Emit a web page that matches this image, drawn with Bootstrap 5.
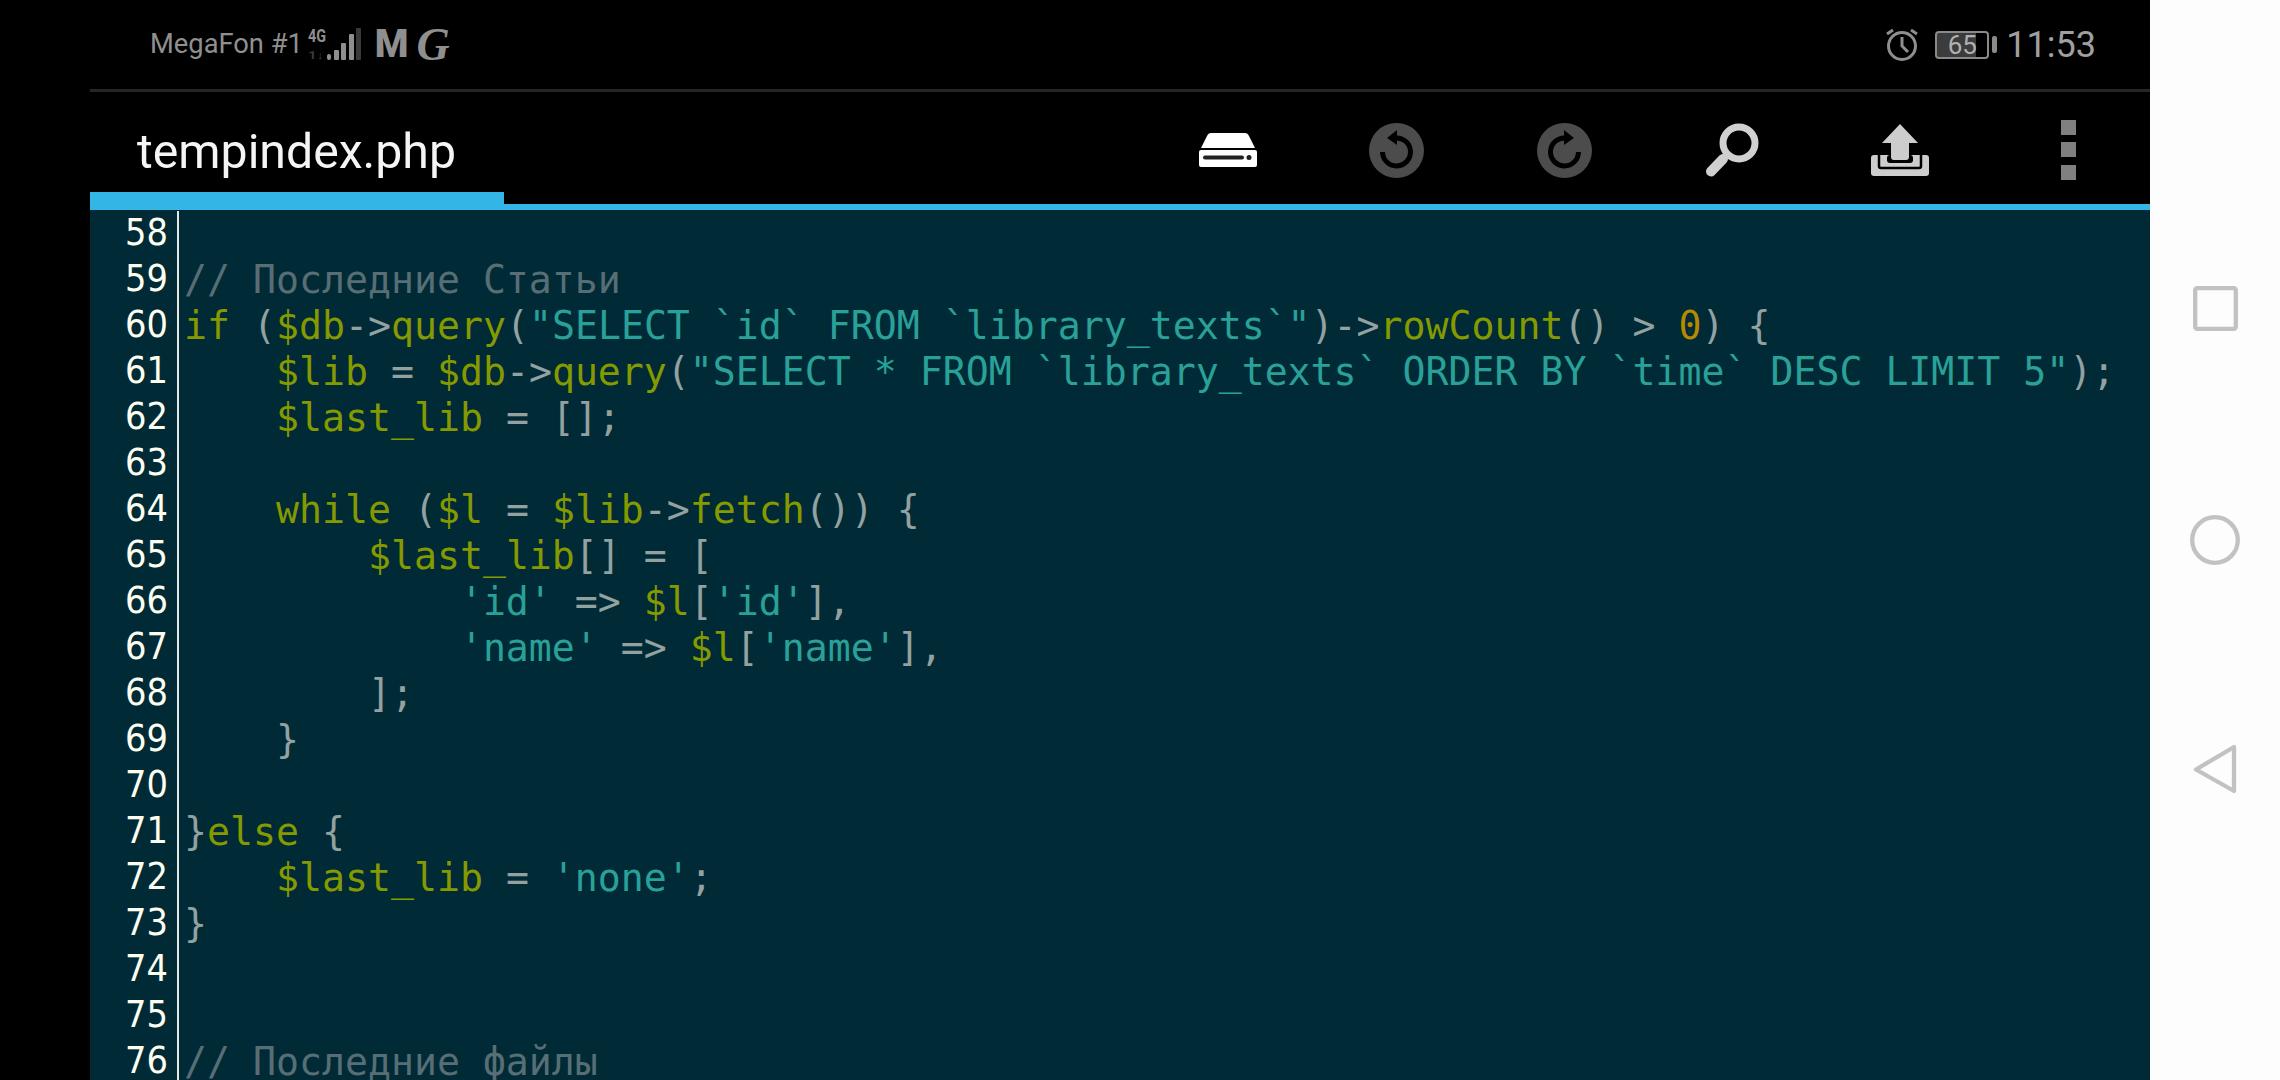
<!DOCTYPE html>
<html><head><meta charset="utf-8">
<link href="https://cdn.jsdelivr.net/npm/bootstrap@5.3.0/dist/css/bootstrap.min.css" rel="stylesheet">
<style>
html,body{margin:0;height:1080px;overflow:hidden;background:#000}
.shell{width:2280px;height:1080px}
.gutterleft{width:90px;background:#000}
.phone{width:2060px;background:#000;min-width:0}
.navside{width:130px;background:#fdfdfd}
.statusline{height:92px;border-bottom:3px solid #262626;padding:0 54px 0 60px;font-family:Roboto,sans-serif;color:#8f8f8f}
.carrier{font-size:27.3px;line-height:1}
.clock{font-size:36px;line-height:1;color:#a0a0a0;margin-left:9px}
.toolrow{height:112px;padding-left:47px}
.fname{font-family:Roboto,sans-serif;font-size:48.200px;line-height:1;color:#f5f5f5;margin-top:8px}
.tools{height:112px;flex:1;margin-right:-2px}
.tool{width:168px;height:112px;padding-top:4px}
.tabbar{height:6px;background:#33b5e5;position:relative}
.tabactive{position:absolute;left:0;bottom:0;width:414px;height:18px;background:#33b5e5}
.editor{background:#002b36;height:870px;overflow:hidden;font-family:"DejaVu Sans Mono",monospace;font-size:38.200px;line-height:46px;padding-top:1px}
.cline{height:46px;white-space:pre}
.num{display:inline-block;text-align:right;color:#fdfdf0;padding-right:9px;height:46px;line-height:43px;border-right:2px solid #e8e8e0;vertical-align:top;margin-right:5px;box-sizing:content-box;width:78px;font-family:"DejaVu Sans Condensed","DejaVu Sans",sans-serif;font-stretch:condensed;font-size:37.500px}
.g{color:#859900}.s{color:#2aa198}.c{color:#586e75}.p{color:#93a1a1}.o{color:#b58900}
.bat{width:54px;height:28px;border:2px solid #8a8a8a;border-radius:4px;font-size:26px;line-height:24px;text-align:center;color:#b0b0b0;background:linear-gradient(90deg,#3c3c3c 78%,#000 78%);font-family:Roboto,sans-serif}
.batcap{width:5px;height:17px;background:#8a8a8a;border-radius:2px;margin-left:3px}
.mlogo{font-family:Roboto,sans-serif;font-weight:900;font-size:38.500px;line-height:1;color:#8f8f8f;margin-left:12px}
.glogo{font-family:"Liberation Serif",serif;font-weight:700;font-style:italic;font-size:46px;line-height:1;color:#8f8f8f;margin-left:8px}
</style></head>
<body>
<div class="shell d-flex">
<div class="gutterleft flex-shrink-0"></div>
<div class="phone d-flex flex-column flex-shrink-0">
 <div class="statusline d-flex align-items-center justify-content-between">
  <div class="d-flex align-items-center">
   <span class="carrier">MegaFon #1</span>
   <svg class="ms-1" width="56" height="48" viewBox="0 -6 56 48"><text x="1" y="15" font-family="Roboto,sans-serif" font-size="19" font-weight="700" fill="#8f8f8f" textLength="18" lengthAdjust="spacingAndGlyphs">4G</text><text x="1" y="32" font-family="Roboto,sans-serif" font-size="11" font-weight="700" fill="#3a3a3a" textLength="16" lengthAdjust="spacingAndGlyphs">1↓</text><g fill="#8f8f8f"><rect x="20" y="27" width="4" height="6" rx="2"/><rect x="27" y="23" width="5" height="10" rx="1"/><rect x="34" y="16" width="5" height="17" rx="1"/><rect x="42" y="7" width="5" height="26" rx="1"/></g><rect x="49" y="1" width="5" height="32" rx="1" fill="#3a3a3a"/></svg>
   <span class="mlogo">M</span>
   <span class="glogo">G</span>
  </div>
  <div class="d-flex align-items-center">
   <svg width="34" height="34" viewBox="0 0 34 34" fill="none" stroke="#8f8f8f" stroke-width="3"><circle cx="17" cy="18" r="13.500"/><path d="M17 9v9l6 6M2 6l6-4M32 6l-6-4"/></svg>
   <div class="bat ms-3">65</div><div class="batcap"></div>
   <span class="clock">11:53</span>
  </div>
 </div>
 <div class="toolrow d-flex align-items-center">
  <span class="fname">tempindex.php</span>
  <div class="tools d-flex justify-content-end">
   <div class="tool d-flex align-items-center justify-content-center"><svg width="58" height="34" viewBox="0 0 58 34"><path d="M12 0h34c2 0 3 1 4 3l6 12H2L8 3c1-2 2-3 4-3z" fill="#fff"/><rect x="0" y="17" width="58" height="17" rx="2" fill="#fff"/><rect x="4" y="22.500" width="41" height="4" rx="2" fill="#222"/><circle cx="50" cy="24.500" r="2.500" fill="#222"/></svg></div>
   <div class="tool d-flex align-items-center justify-content-center"><svg width="55" height="55" viewBox="0 0 55 55"><circle cx="27.500" cy="27.500" r="27.500" fill="#4c4c4c"/><path d="M18 15l10-8v15z" fill="#000"/><path d="M26 15a14 14 0 1 1-12.500 14" fill="none" stroke="#000" stroke-width="5"/></svg></div>
   <div class="tool d-flex align-items-center justify-content-center"><svg width="55" height="55" viewBox="0 0 55 55"><circle cx="27.500" cy="27.500" r="27.500" fill="#4c4c4c"/><path d="M37 15l-10-8v15z" fill="#000"/><path d="M29 15a14 14 0 1 0 12.500 14" fill="none" stroke="#000" stroke-width="5"/></svg></div>
   <div class="tool d-flex align-items-center justify-content-center"><svg width="54" height="54" viewBox="0 0 54 54"><circle cx="34" cy="20" r="16" fill="none" stroke="#d0d0d0" stroke-width="7"/><path d="M18 36L6 48.500" stroke="#cfcfcf" stroke-width="10" stroke-linecap="round"/><path d="M22 32l-6 6" stroke="#cfcfcf" stroke-width="6"/></svg></div>
   <div class="tool d-flex align-items-center justify-content-center"><svg width="58" height="52" viewBox="0 0 58 52"><rect y="31" width="58" height="21" rx="3" fill="#cdcdcd"/><path d="M8 31v11a2 2 0 0 0 2 2h38a2 2 0 0 0 2-2V31" fill="none" stroke="#000" stroke-width="2.500"/><rect x="16" y="31" width="26" height="8" rx="3" fill="#000"/><path d="M29 0l18 19H38v14c0 2-1 3-3 3H23c-2 0-3-1-3-3V19h-9z" fill="#cdcdcd"/></svg></div>
   <div class="tool d-flex align-items-center justify-content-center"><svg width="15" height="60" viewBox="0 0 15 60"><rect width="15" height="15" y="0" fill="#808080"/><rect width="15" height="15" y="22" fill="#808080"/><rect width="15" height="15" y="45" fill="#808080"/></svg></div>
  </div>
 </div>
 <div class="tabbar"><div class="tabactive"></div></div>
 <div class="editor">
<div class="cline"><span class="num">58</span></div>
<div class="cline"><span class="num">59</span><span class="c">// Последние Статьи</span></div>
<div class="cline"><span class="num">60</span><span class="g">if</span> <span class="p">(</span><span class="g">$db</span><span class="p">-&gt;</span><span class="g">query</span><span class="p">(</span><span class="s">"SELECT `id` FROM `library_texts`"</span><span class="p">)-&gt;</span><span class="g">rowCount</span><span class="p">() &gt; </span><span class="o">0</span><span class="p">) {</span></div>
<div class="cline"><span class="num">61</span>    <span class="g">$lib</span><span class="p"> = </span><span class="g">$db</span><span class="p">-&gt;</span><span class="g">query</span><span class="p">(</span><span class="s">"SELECT * FROM `library_texts` ORDER BY `time` DESC LIMIT 5"</span><span class="p">);</span></div>
<div class="cline"><span class="num">62</span>    <span class="g">$last_lib</span><span class="p"> = [];</span></div>
<div class="cline"><span class="num">63</span></div>
<div class="cline"><span class="num">64</span>    <span class="g">while</span><span class="p"> (</span><span class="g">$l</span><span class="p"> = </span><span class="g">$lib</span><span class="p">-&gt;</span><span class="g">fetch</span><span class="p">()) {</span></div>
<div class="cline"><span class="num">65</span>        <span class="g">$last_lib</span><span class="p">[] = [</span></div>
<div class="cline"><span class="num">66</span>            <span class="s">'id'</span><span class="p"> =&gt; </span><span class="g">$l</span><span class="p">[</span><span class="s">'id'</span><span class="p">],</span></div>
<div class="cline"><span class="num">67</span>            <span class="s">'name'</span><span class="p"> =&gt; </span><span class="g">$l</span><span class="p">[</span><span class="s">'name'</span><span class="p">],</span></div>
<div class="cline"><span class="num">68</span>        <span class="p">];</span></div>
<div class="cline"><span class="num">69</span>    <span class="p">}</span></div>
<div class="cline"><span class="num">70</span></div>
<div class="cline"><span class="num">71</span><span class="p">}</span><span class="g">else</span><span class="p"> {</span></div>
<div class="cline"><span class="num">72</span>    <span class="g">$last_lib</span><span class="p"> = </span><span class="s">'none'</span><span class="p">;</span></div>
<div class="cline"><span class="num">73</span><span class="p">}</span></div>
<div class="cline"><span class="num">74</span></div>
<div class="cline"><span class="num">75</span></div>
<div class="cline"><span class="num">76</span><span class="c">// Последние файлы</span></div>
 </div>
</div>
<div class="navside flex-shrink-0 d-flex flex-column align-items-center">
 <svg width="45" height="45" viewBox="0 0 45 45" fill="none" stroke="#c2c2c2" stroke-width="4.300" stroke-linejoin="round" style="margin-top:286px"><rect x="2.200" y="2.200" width="40.600" height="40.600" rx="2"/></svg>
 <svg width="50" height="50" viewBox="0 0 50 50" fill="none" stroke="#c2c2c2" stroke-width="4.300" style="margin-top:184px"><circle cx="25" cy="25" r="22.800"/></svg>
 <svg width="44" height="50" viewBox="0 0 44 50" fill="none" stroke="#c2c2c2" stroke-width="4.300" stroke-linejoin="round" style="margin-top:179px"><path d="M41 3v44L3 25.500z"/></svg>
</div>
</div>
<script src="https://cdn.jsdelivr.net/npm/bootstrap@5.3.0/dist/js/bootstrap.bundle.min.js"></script>
</body></html>
